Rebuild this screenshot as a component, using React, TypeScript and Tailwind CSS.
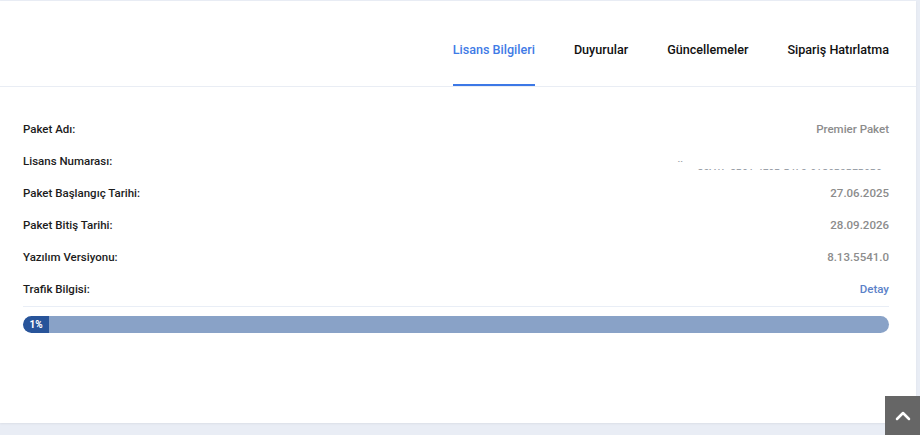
import { ChevronUp } from 'lucide-react';

const tabs = ['Lisans Bilgileri', 'Duyurular', 'Güncellemeler', 'Sipariş Hatırlatma'];

const rows: { label: string; value: string; kind?: 'masked' | 'link' }[] = [
    { label: 'Paket Adı:', value: 'Premier Paket' },
    { label: 'Lisans Numarası:', value: 'C5A1F-8B01-4E0B-B1F3-01C6B3B2B0B0', kind: 'masked' },
    { label: 'Paket Başlangıç Tarihi:', value: '27.06.2025' },
    { label: 'Paket Bitiş Tarihi:', value: '28.09.2026' },
    { label: 'Yazılım Versiyonu:', value: '8.13.5541.0' },
    { label: 'Trafik Bilgisi:', value: 'Detay', kind: 'link' },
];

export default function App() {
    const usage = 1;

    return (
        <div className="relative w-[920px] h-[435px] overflow-hidden bg-[#e9edf5] pt-px font-['Roboto',sans-serif]">
            <div className="w-[916px] h-[422px] bg-white shadow-[0_1px_2px_rgba(0,0,0,0.06)]">
                {/* tab header */}
                <div className="flex h-[86px] justify-end gap-[39px] border-b border-[#e9edf4] pr-[27px]">
                    {tabs.map((t, i) => (
                        <div
                            key={t}
                            className={
                                'flex h-full items-center pt-4 border-b-2 text-[12.6px] font-medium ' +
                                (i === 0 ? 'border-[#3c78e6] text-[#3f7be6]' : 'border-transparent text-[#111]')
                            }
                        >
                            {t}
                        </div>
                    ))}
                </div>

                {/* license details */}
                <div className="pl-[23px] pr-[27px] pt-[27px]">
                    {rows.map((r) => (
                        <div key={r.label} className="flex h-[32px] items-center justify-between text-[11.5px] font-medium">
                            <span className="text-[#1c1c1c]">{r.label}</span>
                            {r.kind === 'masked' ? (
                                <div className="flex flex-col items-end pt-[6px]">
                                    <div className="mr-[206px] h-px overflow-hidden">
                                        <div className="-mt-[7px] text-[10px] leading-[10px] text-[#9aa0a8]">..</div>
                                    </div>
                                    <div className="mt-[7px] mr-[7px] h-px overflow-hidden">
                                        <div className="-mt-[7px] text-[10px] leading-[10px] text-[#9aa0a8]">{r.value}</div>
                                    </div>
                                </div>
                            ) : (
                                <span className={r.kind === 'link' ? 'text-[#5b82c8]' : 'text-[#8c8c8c]'}>{r.value}</span>
                            )}
                        </div>
                    ))}

                    <div className="border-t border-[#e9eef6] pt-[9px]">
                        <div className="flex h-[17px] overflow-hidden rounded-full bg-[#89a2c7]">
                            <div
                                className="flex items-center justify-center rounded-l-full bg-[#28549a] text-[10px] font-bold text-white"
                                style={{ width: `${Math.max(usage * 26, 26)}px` }}
                            >
                                {usage}%
                            </div>
                        </div>
                    </div>
                </div>
            </div>

            {/* scroll-to-top */}
            <button className="absolute bottom-0 right-0 flex h-[39px] w-[35px] items-center justify-center bg-[#666666] text-white">
                <ChevronUp size={24} strokeWidth={2.5} />
            </button>
        </div>
    );
}
